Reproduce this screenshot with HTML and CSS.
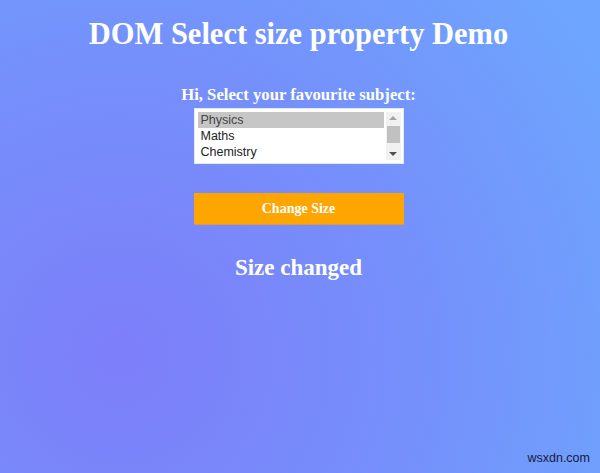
FILE: index.html
```html
<!DOCTYPE html>
<html>
<head>
<meta charset="utf-8">
<link rel="stylesheet" href="styles.css">
</head>
<body>
<div class="page">
  <h1 class="title">DOM Select size property Demo</h1>
  <h3 class="subtitle">Hi, Select your favourite subject:</h3>
  <div class="listbox">
    <div class="options">
      <div class="option selected">Physics</div>
      <div class="option">Maths</div>
      <div class="option">Chemistry</div>
    </div>
    <div class="scrollbar">
      <div class="arrow up"></div>
      <div class="thumb"></div>
      <div class="arrow down"></div>
    </div>
  </div>
  <button class="btn">Change Size</button>
  <h2 class="result">Size changed</h2>
</div>
<div class="watermark">wsxdn.com</div>
</body>
</html>
```
FILE: styles.css
```css
html, body {
  margin: 0;
  height: 100%;
}
body {
  background: radial-gradient(circle at 120px 355px, #7d7ef9 0px, #7590fb 300px, #6ea5fe 560px);
  font-family: "Liberation Serif", "Times New Roman", serif;
  color: #fff;
  position: relative;
  overflow: hidden;
}
.page {
  display: flex;
  flex-direction: column;
  align-items: center;
  padding: 17px 3px 0 0;
}
.title {
  margin: 0;
  font-size: 30.5px;
  font-weight: bold;
  line-height: 34px;
}
.subtitle {
  margin: 34px 0 0;
  font-size: 16.7px;
  line-height: 20px;
  font-weight: bold;
}
.listbox {
  margin-top: 3px;
  width: 210px;
  height: 56px;
  background: #fff;
  box-sizing: border-box;
  border: 1px solid #e8e8ef;
  display: flex;
  padding: 3px 2px 3px 3px;
}
.options {
  flex: 1;
  font-family: "Liberation Sans", Arial, sans-serif;
  font-size: 12.5px;
  color: #222;
}
.option {
  height: 16px;
  line-height: 16px;
  padding-left: 3px;
}
.option.selected {
  background: #c6c6c6;
  color: #444;
}
.scrollbar {
  width: 15px;
  margin-left: 2px;
  background: #f1f1f1;
  display: flex;
  flex-direction: column;
  align-items: center;
}
.arrow {
  width: 0;
  height: 0;
  border-left: 4px solid transparent;
  border-right: 4px solid transparent;
}
.arrow.up {
  margin-top: 4px;
  border-bottom: 4px solid #a3a3a3;
}
.thumb {
  margin-top: 6px;
  width: 13px;
  height: 17px;
  background: #c1c1c1;
}
.arrow.down {
  margin-top: 9px;
  border-top: 4px solid #505050;
}
.btn {
  margin-top: 29px;
  width: 210px;
  height: 32px;
  background: #ffa500;
  border: none;
  border-bottom: 1px solid #d89a45;
  color: #fff;
  font-family: "Liberation Serif", "Times New Roman", serif;
  font-weight: bold;
  font-size: 14px;
  padding: 0;
}
.result {
  margin: 29px 0 0;
  font-size: 23px;
  line-height: 28px;
  font-weight: bold;
}
.watermark {
  position: absolute;
  right: 10px;
  bottom: 8px;
  font-family: "Liberation Sans", Arial, sans-serif;
  font-size: 12.5px;
  color: #1a1a3a;
}
```
